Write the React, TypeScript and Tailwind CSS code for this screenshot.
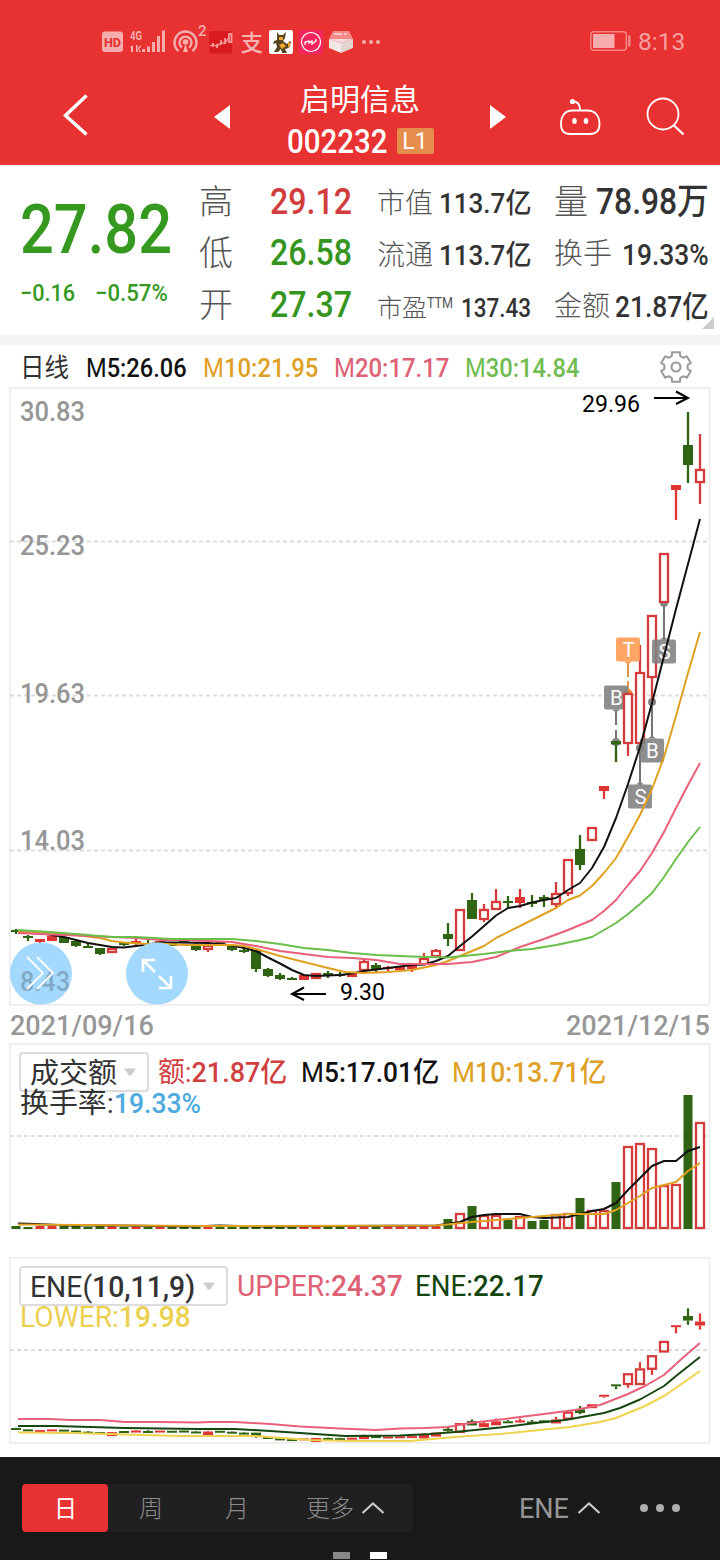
import { useLayoutEffect, useRef, useState } from "react";
import type { ReactNode } from "react";

// scales a single line of text horizontally so that it fills its own box
const Fit = ({ className = "", children }: { className?: string; children: ReactNode }) => {
  const box = useRef<HTMLSpanElement>(null);
  const text = useRef<HTMLSpanElement>(null);
  const [scale, setScale] = useState(1);

  useLayoutEffect(() => {
    if (box.current && text.current && text.current.offsetWidth > 0) {
      setScale(box.current.clientWidth / text.current.offsetWidth);
    }
  }, []);

  return (
    <span ref={box} className={`block shrink-0 leading-none ${className}`}>
      <span ref={text} className="inline-block origin-left whitespace-nowrap" style={{ transform: `scaleX(${scale})` }}>
        {children}
      </span>
    </span>
  );
};

type Kind = "g" | "r" | "h"; // green, red filled, red hollow

// kind, high, body top, body bottom, low, volume height
const candles: [Kind, number, number, number, number, number][] = [
  ["g", 929, 930, 932, 934, 3],
  ["g", 935, 936, 938, 941, 2],
  ["r", 939, 939, 942, 947, 3],
  ["r", 936, 936, 941, 941, 3],
  ["g", 937, 937, 943, 943, 3],
  ["g", 940, 941, 946, 947, 3],
  ["g", 943, 946, 948, 948, 2],
  ["g", 948, 948, 954, 955, 3],
  ["h", 948, 948, 953, 953, 3],
  ["g", 943, 943, 945, 946, 2],
  ["r", 939, 941, 944, 945, 3],
  ["g", 940, 943, 945, 946, 2],
  ["r", 941, 941, 943, 943, 3],
  ["g", 942, 942, 946, 946, 2],
  ["g", 940, 941, 943, 943, 3],
  ["g", 942, 945, 950, 951, 2],
  ["h", 942, 945, 950, 952, 3],
  ["g", 942, 942, 944, 944, 2],
  ["g", 944, 946, 950, 951, 3],
  ["g", 947, 950, 952, 953, 2],
  ["g", 950, 950, 969, 972, 3],
  ["g", 968, 969, 976, 977, 3],
  ["g", 973, 975, 979, 980, 2],
  ["g", 977, 978, 980, 980, 2],
  ["r", 975, 975, 980, 980, 3],
  ["h", 973, 973, 979, 979, 3],
  ["g", 971, 973, 976, 978, 2],
  ["g", 972, 974, 976, 977, 2],
  ["r", 972, 972, 977, 977, 3],
  ["h", 959, 961, 971, 971, 4],
  ["g", 963, 965, 970, 972, 3],
  ["r", 966, 967, 969, 971, 3],
  ["r", 966, 966, 970, 970, 3],
  ["r", 965, 965, 969, 972, 3],
  ["h", 953, 958, 965, 965, 4],
  ["h", 949, 950, 957, 957, 4],
  ["g", 923, 934, 939, 946, 10],
  ["h", 909, 909, 951, 951, 16],
  ["g", 893, 900, 919, 919, 23],
  ["h", 904, 909, 920, 922, 14],
  ["h", 889, 901, 910, 910, 14],
  ["g", 896, 901, 903, 908, 9],
  ["r", 889, 897, 903, 908, 13],
  ["g", 895, 902, 904, 907, 8],
  ["g", 895, 897, 900, 907, 9],
  ["h", 882, 893, 905, 907, 15],
  ["h", 859, 859, 894, 896, 16],
  ["g", 835, 849, 865, 870, 31],
  ["h", 827, 827, 841, 841, 19],
  ["r", 786, 786, 791, 799, 19],
  ["g", 741, 741, 744.5, 762, 47],
  ["h", 693, 693, 744, 756, 83],
  ["h", 645, 672, 744, 744, 86],
  ["h", 615, 615, 678, 700, 81],
  ["h", 553, 553, 603, 603, 44],
  ["r", 485, 485, 490, 520, 45],
  ["g", 412, 445, 465, 483, 134],
  ["h", 434, 469, 483, 504, 107],
];

const xAt = (i: number) => 700 - 12 * (candles.length - 1 - i);
const GREEN = "#2f6413";
const RED = "#d43c3c";

const Candle = ({ kind, x, high, top, bottom, low }: {
  kind: Kind; x: number; high: number; top: number; bottom: number; low: number;
}) => {
  const color = kind === "g" ? GREEN : kind === "r" ? "#df3634" : RED;
  return (
    <g stroke={color} strokeWidth={2.3}>
      {high < top && <path d={`M${x} ${high}V${top}`} />}
      {low > bottom && <path d={`M${x} ${bottom}V${low}`} />}
      {kind === "h" ? (
        <rect x={x - 4} y={top + 1} width={8} height={Math.max(bottom - top - 2, 1)} fill="#fff" />
      ) : (
        <rect x={x - 5} y={top} width={10} height={bottom - top} fill={color} stroke="none" />
      )}
    </g>
  );
};

const Line = ({ color, points }: { color: string; points: string }) => (
  <polyline points={points} fill="none" stroke={color} strokeWidth={2} strokeLinejoin="round" />
);

const Grid = ({ y }: { y: number }) => (
  <path d={`M10 ${y}H709`} stroke="#dcdcdc" strokeWidth={1.8} strokeDasharray="4 3" />
);

const Frame = ({ y, height }: { y: number; height: number }) => (
  <rect x={10} y={y} width={699.5} height={height} fill="none" stroke="#ececec" strokeWidth={1.6} />
);

// trade marker: letter tile with a pointer toward its candle
const Tag = ({ x, y, letter, up, color = "#808080" }: {
  x: number; y: number; letter: string; up?: boolean; color?: string;
}) => (
  <g>
    <rect x={x - 12} y={y - 12} width={24} height={24} rx={2} fill={color} fillOpacity={0.88} />
    {up ? (
      <path d={`M${x - 4} ${y - 12}l4 -3l4 3z`} fill={color} />
    ) : (
      <path d={`M${x - 4} ${y + 12}l4 3l4 -3z`} fill={color} />
    )}
    <text x={x + 0.5} y={y + 7} textAnchor="middle" fontSize={20.5} fill="#fff">{letter}</text>
  </g>
);

const MainChart = () => (
  <svg className="block font-[Roboto]" width={720} height={619} viewBox="0 387 720 619">
    <Frame y={387.8} height={617} />
    {[541.5, 695.5, 850.5].map((y) => <Grid key={y} y={y} />)}
    <g fontSize={27} fontWeight={500} fill="#969696">
      <text x={20} y={420.5} textLength={65} lengthAdjust="spacingAndGlyphs">30.83</text>
      <text x={20} y={554.5} textLength={65} lengthAdjust="spacingAndGlyphs">25.23</text>
      <text x={20} y={702.5} textLength={65} lengthAdjust="spacingAndGlyphs">19.63</text>
      <text x={20} y={850} textLength={65} lengthAdjust="spacingAndGlyphs">14.03</text>
    </g>
    <g stroke="#666" strokeWidth={1.8}>
      <path d="M664 603V640M652 702V738M640 748V785M616 711V740" />
      <path d="M628 663V692" stroke="#d98a3d" />
      <path d="M616 725v5M628 677v4" stroke="#fff" strokeWidth={3} />
    </g>
    <g fill="#858585">
      <circle cx={664} cy={603} r={4} />
      <circle cx={652} cy={702} r={4} />
      <circle cx={640} cy={748} r={4} />
      <circle cx={616} cy={742} r={4} />
      <circle cx={628} cy={693} r={4} fill="#f5822f" />
    </g>
    <Tag x={616} y={697.5} letter="B" />
    {candles.map(([kind, high, top, bottom, low], i) => (
      <Candle key={i} kind={kind} x={xAt(i)} high={high} top={top} bottom={bottom} low={low} />
    ))}
    <Tag x={628} y={649.5} letter="T" color="#ff9a50" />
    <Tag x={664} y={651.5} letter="S" up />
    <Tag x={652} y={750.5} letter="B" up />
    <Tag x={640} y={796.5} letter="S" up />
    <Line color="#111" points="18,932 46,934 64,937 76,940 88,943 100,945 112,947 124,947.5 136,946 148,944.5 160,942.5 180,942.5 208,943 220,944 232,945.5 244,948 256,951 268,957.5 280,963.5 292,970 304,975 316,976 328,975.5 340,975 352,973.5 364,971 376,969.5 400,966.5 412,965 424,964.5 436,961 448,956 460,946 472,936.5 484,926 496,915.5 508,908 520,906 532,902.5 544,900 556,898 568,890 580,883 592,868 604,847 616,818 628,784 640,747 652,703 664,656 676,609 688,564 700,519" />
    <Line color="#e0a020" points="18,932 50,933 76,935 100,938 112,941 124,942.5 148,944 160,943.5 184,945 208,945 232,945 244,946 256,949 280,956 304,962 328,968 345,972 364,973 388,972 412,970 424,967.5 436,965 448,961 460,956 484,946 496,938 520,926 532,920 556,908 568,900 580,895.5 592,886 604,873 616,858 628,837 640,815 652,789 664,757 676,716 688,673 700,632" />
    <Line color="#e8607a" points="18,933 40,934 64,935 112,937 136,938 160,940 184,940 208,941 232,942 256,946 280,951 304,954 328,957 352,958 376,960 400,964 424,964 448,964 472,962 496,957 520,947 544,939 568,930 592,920 604,911 616,900 628,885 640,871 652,853 664,832 676,808 688,785 700,763" />
    <Line color="#6abf4b" points="18,930 50,932 76,934 112,937 136,937 172,939 208,939 232,939 256,941 280,944 304,948 328,950 352,953 376,955 412,956.5 448,957.5 484,954 508,951 532,949 556,945 580,940 592,937 604,930 616,923 628,914 640,904 652,893 664,877 676,859 688,842 700,827" />
    <g fontSize={24} fill="#000">
      <text x={582} y={412} textLength={58} lengthAdjust="spacingAndGlyphs">29.96</text>
      <text x={340} y={1000} textLength={45} lengthAdjust="spacingAndGlyphs">9.30</text>
    </g>
    <g fill="none" stroke="#000" strokeWidth={2}>
      <path d="M654 398H688M676 391.5L688 398L676 404" />
      <path d="M326 994H292M304 987.5L292 994L304 1000" />
    </g>
    <g fill="#a4d9ff">
      <circle cx={41} cy={973.5} r={31} />
      <circle cx={157} cy={973.5} r={31} />
    </g>
    <text x={20} y={990.5} fontSize={27} fontWeight={500} fill="#82a9c6" textLength={50} lengthAdjust="spacingAndGlyphs">8.43</text>
    <g fill="none" stroke="#fff">
      <path d="M27 957L43 973L27 989M37 957L53 973L37 989" strokeWidth={1.8} />
      <path d="M155 972L143 960M143 972V960H155M159 976L171 988M171 976V988H159" strokeWidth={2.6} />
    </g>
  </svg>
);

const VolumeChart = () => (
  <svg className="absolute inset-0" width={720} height={187} viewBox="0 1043 720 187">
    <Frame y={1043.8} height={185} />
    <Grid y={1136} />
    {candles.map(([kind, , , , , v], i) =>
      kind === "g" || v < 6 ? (
        <rect key={i} x={xAt(i) - 4.5} y={1229 - v} width={9} height={v} fill={kind === "g" ? GREEN : "#df3634"} />
      ) : (
        <rect key={i} x={xAt(i) - 4} y={1230 - v} width={8} height={v - 2} fill="#fff" stroke={RED} strokeWidth={2.3} />
      )
    )}
    <Line color="#111" points="18,1223.5 36,1224 70,1225.5 120,1225.5 190,1226.5 220,1225.5 260,1226.5 436,1225.5 460,1222 472,1217 484,1215 496,1214 520,1214 532,1217 544,1218 568,1217 580,1214 592,1211 604,1209 616,1203 628,1190 640,1178 652,1166 664,1161 676,1161 688,1151 700,1147" />
    <Line color="#e0a020" points="18,1224.5 200,1226 436,1225.5 472,1222 508,1219 544,1216 568,1214 604,1214 616,1210 640,1196 652,1188 664,1185 676,1182 688,1171 700,1163" />
  </svg>
);

// main price coordinates squeezed into the ENE panel
const toEne = (y: number) => 1427 + (y - 930) * 0.231;

const EneChart = () => (
  <svg className="absolute inset-0" width={720} height={188} viewBox="0 1257 720 188">
    <Frame y={1257.8} height={185} />
    <Grid y={1350} />
    {candles.map(([kind, high, top, bottom, low], i) => {
      const small = kind === "h" && toEne(bottom) - toEne(top) < 7;
      const t = toEne(top) + 1;
      const b = Math.max(toEne(bottom) + 1, t + (small ? 4 : 2));
      return (
        <Candle key={i} kind={small ? "r" : kind} x={xAt(i)} high={toEne(high) + 1} top={t} bottom={b} low={toEne(low) + 1} />
      );
    })}
    <Line color="#e8607a" points="18,1419 50,1419 70,1420 100,1420 125,1422 160,1422 197,1422.5 210,1422 235,1422 270,1424 300,1426.5 340,1428.5 376,1430 400,1428.5 425,1428 448,1427 470,1423 505,1419 540,1414.5 575,1410 600,1405 628,1394 645,1386 664,1375 682,1358.5 700,1343" />
    <Line color="#14470f" points="18,1426 55,1426 125,1428 200,1429 235,1429 270,1431 300,1433 345,1436 400,1435.5 430,1434 455,1432 500,1427.5 540,1422.5 565,1420 604,1413 620,1408 640,1399.5 664,1386 676,1376 700,1357" />
    <Line color="#efd34e" points="18,1432.5 70,1433 125,1434.5 180,1436 255,1436 310,1440 350,1441 410,1441 455,1437 500,1434 530,1431 570,1427 600,1422 616,1418 628,1413 645,1406 664,1396 680,1385 700,1371" />
  </svg>
);

const StatusBar = () => (
  <div className="flex h-[82px] items-center pl-[100px] pr-[35px]">
    <svg width={284} height={44} viewBox="100 19 284 44" className="font-[Roboto]">
      <rect x={102} y={31.5} width={21} height={20.5} rx={3} fill="#f7adad" />
      <text x={112.5} y={46.5} fontSize={12.5} fontWeight={800} fill="#e83131" textAnchor="middle" textLength={17} lengthAdjust="spacingAndGlyphs">HD</text>
      <g fill="#f7adad">
        <text x={130} y={40} fontSize={12.5} fontWeight={700} textLength={12} lengthAdjust="spacingAndGlyphs">4G</text>
        <path d="M130 47l3-2v7h-2v-4zM136 45h1.600v7H136zM138 48l3-3v2l-2 2l2 3h-2z" />
        <path d="M142 49h3v3h-3zM147 46.500h3V52h-3zM152 42h3v10h-3zM157 36h3v16h-3zM162 30.500h3V52h-3z" />
        <circle cx={185.5} cy={42} r={2.8} />
        <text x={198} y={36} fontSize={15} fontWeight={500}>2</text>
        <path d="M183 52l2.500-8l2.500 8z" />
      </g>
      <g fill="none" stroke="#f7adad" strokeWidth={2.4}>
        <path d="M182 47.500a6 6 0 1 1 7 0M178.500 51a11 11 0 1 1 14 0" />
      </g>
      <rect x={209} y={31} width={23} height={22.5} rx={3} fill="#d91c20" />
      <g fill="none" stroke="#f49a9a" strokeWidth={1.3}>
        <path d="M210 46l3-1.500l4 2l4-4l4 1l3-5" />
        <path d="M213 43v4M217 44v4M221 40v5M225 38v6M229 34h2.500v8H229z" strokeWidth={1.8} />
      </g>
      <text x={240.5} y={50.5} fontSize={22.5} fontWeight={500} fill="#f7b3b3" className="font-['Noto_Sans_CJK_SC']">支</text>
      <rect x={269} y={30} width={24} height={24} rx={2} fill="#fff" />
      <path d="M277 32l2 3h4l3-3l-1 6l-2 3l4 3l3-3l1 1l-2 6l-4 1l2 4h-5l-1-4l-3 3h-4l3-5l-1-4l-3 1l1-3l3-1z" fill="#57431f" />
      <path d="M279 37h4v3h-4zM279 45l4-2l3 3l-4 3zM288 41l3 3l-3 4z" fill="#f0a52b" />
      <rect x={299} y={30} width={24} height={24} fill="#f5265f" />
      <circle cx={311} cy={42} r={9.5} fill="none" stroke="#fff" strokeWidth={1.2} />
      <path d="M305 45v-3l4-1v2l3-2v3l4-3v-2" fill="none" stroke="#fff" strokeWidth={1.3} />
      <path d="M333 31h16l4 8h-24z" fill="#f28a8a" />
      <path d="M329 39l12 4v10l-12-5z" fill="#f3e6e6" />
      <path d="M353 39l-12 4v10l12-5z" fill="#e3d3d3" />
      <path d="M329 39h24l-12 4z" fill="#f7dada" />
      <path d="M334 34h8M344 34h3" stroke="#fff" strokeWidth={1.2} />
      <g fill="#f7adad">
        <circle cx={364} cy={42} r={2} />
        <circle cx={371} cy={42} r={2} />
        <circle cx={378} cy={42} r={2} />
      </g>
    </svg>
    <svg className="ml-auto" width={42} height={22} viewBox="589 31 42 22">
      <rect x={590.8} y={32.8} width={35.5} height={18.5} rx={3} fill="none" stroke="#f28585" strokeWidth={1.6} />
      <rect x={593} y={35} width={21.5} height={14} fill="#f7adad" />
      <path d="M628 36.500h2.500v11H628z" fill="#f28585" />
    </svg>
    <Fit className="ml-[7px] mt-[2px] w-[47px] text-2xl leading-none text-[#f5a0a0]">8:13</Fit>
  </div>
);

const TitleBar = () => (
  <div className="flex h-[83px] items-start">
    <svg className="ml-[62px] mt-[11px]" width={28} height={44} viewBox="62 93 28 44">
      <path d="M86.500 95.500L65.500 115.500L86.500 134.500" fill="none" stroke="#fff" strokeWidth={3.5} />
    </svg>
    <svg className="ml-[124px] mt-[23px]" width={16} height={24} viewBox="0 0 16 24">
      <path d="M0 12L16 0V24z" fill="#fff" />
    </svg>
    <div className="ml-[56px] flex w-[148px] flex-col items-center pt-[2px]">
      <span className="text-[30px] leading-[32px]">启明信息</span>
      <div className="mt-[8px] flex h-[34px] items-center gap-[9px]">
        <Fit className="w-[101px] text-[33px] font-medium">002232</Fit>
        <span className="flex h-[26px] w-[37px] items-center justify-center rounded-[2px] bg-[#e58e4b] text-[23px] leading-none">L1</span>
      </div>
    </div>
    <svg className="ml-[56px] mt-[23px]" width={16} height={24} viewBox="0 0 16 24">
      <path d="M16 12L0 0V24z" fill="#fff" />
    </svg>
    <svg className="ml-[52px] mt-[15px]" width={44} height={42} viewBox="558 97 44 42" fill="none" stroke="#fff" strokeWidth={1.8}>
      <path d="M572 110.500H588C594 110.500 599.500 115 599.500 124C599.500 131 596 134 590 134H570C564 134 561 131 561 124C561 115 566 110.500 572 110.500Z" />
      <path d="M573 101.500q7 0 7 8.500" />
      <circle cx={572.5} cy={101.5} r={2.6} fill="#fff" stroke="none" />
      <ellipse cx={574.5} cy={121} rx={2.3} ry={3} fill="#fff" stroke="none" />
      <ellipse cx={586} cy={121} rx={2.3} ry={3} fill="#fff" stroke="none" />
    </svg>
    <svg className="ml-[43px] mt-[14px]" width={42} height={42} viewBox="645 96 42 42" fill="none" stroke="#fff" strokeWidth={1.8}>
      <circle cx={663} cy={114} r={15.5} />
      <path d="M673.500 125L683.500 134.500" strokeWidth={2.4} />
    </svg>
  </div>
);

const Quote = () => (
  <section className="relative flex h-[170px] bg-white text-[#333]">
    <div className="ml-[20px] w-[179px] pt-[30px] text-[#36991f]">
      <Fit className="w-[152px] text-[69px] font-medium">27.82</Fit>
      <div className="mt-[17px] flex gap-[20px] text-[24px] font-medium">
        <Fit className="w-[55px]">−0.16</Fit>
        <Fit className="w-[73px]">−0.57%</Fit>
      </div>
    </div>
    <div className="flex w-[153px] flex-col pt-[11px] text-[36px] font-medium">
      <div className="flex h-[51px] items-center justify-between text-[#d13c3c]">
        <span className="text-[34px] font-light leading-none text-[#555]">高</span>
        <Fit className="w-[82px]">29.12</Fit>
      </div>
      <div className="flex h-[52px] items-center justify-between text-[#36951f]">
        <span className="text-[34px] font-light leading-none text-[#555]">低</span>
        <Fit className="w-[82px]">26.58</Fit>
      </div>
      <div className="flex h-[51px] items-center justify-between text-[#36951f]">
        <span className="text-[34px] font-light leading-none text-[#555]">开</span>
        <Fit className="w-[82px]">27.37</Fit>
      </div>
    </div>
    <div className="ml-[25px] flex w-[154px] flex-col pt-[13px] text-[28px] font-medium">
      <div className="flex h-[52px] items-center justify-between">
        <span className="text-[28px] font-light leading-none text-[#555]">市值</span>
        <Fit className="w-[92px]">113.7亿</Fit>
      </div>
      <div className="flex h-[52px] items-center justify-between">
        <span className="text-[28px] font-light leading-none text-[#555]">流通</span>
        <Fit className="w-[92px]">113.7亿</Fit>
      </div>
      <div className="flex h-[52px] items-center justify-between">
        <span className="flex items-center text-[25px] font-light leading-none text-[#555]">
          市盈
          <Fit className="w-[26px] self-start text-[14px] font-normal">TTM</Fit>
        </span>
        <Fit className="w-[70px] text-[26px]">137.43</Fit>
      </div>
    </div>
    <div className="ml-[23px] flex w-[155px] flex-col pt-[11px] text-[30px] font-medium">
      <div className="flex h-[51px] items-center justify-between">
        <span className="text-[34px] font-light leading-none text-[#555]">量</span>
        <Fit className="w-[113px] text-[36px]">78.98万</Fit>
      </div>
      <div className="flex h-[54px] items-center justify-between pt-[1px]">
        <span className="text-[29px] font-light leading-none text-[#555]">换手</span>
        <Fit className="w-[87px]">19.33%</Fit>
      </div>
      <div className="flex h-[51px] items-center justify-between">
        <span className="text-[28px] font-light leading-none text-[#555]">金额</span>
        <Fit className="w-[94px]">21.87亿</Fit>
      </div>
    </div>
    <svg className="absolute bottom-[6px] right-[6px]" width={12} height={12} viewBox="0 0 12 12">
      <path d="M12 0V12H0z" fill="#ccc" />
    </svg>
  </section>
);

const gearPath = () => {
  const points: string[] = [];
  for (let k = 0; k < 6; k++) {
    [[-30, 11.5], [-20, 12], [-15, 15.3], [15, 15.3], [20, 12]].forEach(([offset, r]) => {
      const a = ((k * 60 - 90 + offset) * Math.PI) / 180;
      points.push(`${(16 + r * Math.cos(a)).toFixed(1)} ${(16 + r * Math.sin(a)).toFixed(1)}`);
    });
  }
  return `M${points.join("L")}Z`;
};

const Legend = () => (
  <div className="flex h-[42px] items-center bg-white pl-[20px] pt-[4px] text-[26px] font-medium">
    <Fit className="w-[49px] text-[26px] font-normal text-[#333]">日线</Fit>
    <Fit className="ml-[17px] w-[101px] text-[#111]"><span className="font-normal">M</span>5:26.06</Fit>
    <Fit className="ml-[16px] w-[115px] text-[#dfa026]"><span className="font-normal">M</span>10:21.95</Fit>
    <Fit className="ml-[16px] w-[115px] text-[#de6275]"><span className="font-normal">M</span>20:17.17</Fit>
    <Fit className="ml-[16px] w-[114px] text-[#70bc50]"><span className="font-normal">M</span>30:14.84</Fit>
    <svg className="-mt-[2px] ml-[81px]" width={32} height={32} viewBox="0 0 32 32" fill="none" stroke="#999" strokeWidth={2} strokeLinejoin="round">
      <path d={gearPath()} />
      <circle cx={16} cy={16} r={4.5} strokeWidth={2.2} />
    </svg>
  </div>
);

const Select = ({ className, children }: { className: string; children: ReactNode }) => (
  <div className={`flex h-[40px] shrink-0 items-center justify-between rounded-[4px] border-2 border-[#dcdcdc] bg-white pl-[9px] pr-[10px] text-[#333] ${className}`}>
    {children}
    <svg width={14} height={9} viewBox="0 0 14 9">
      <path d="M1 0.500H13L8.500 7Q7 8.500 5.500 7z" fill="#ccc" />
    </svg>
  </div>
);

const Chevron = ({ className }: { className: string }) => (
  <svg className={className} width={24} height={14} viewBox="0 0 24 14">
    <path d="M1.500 12L12 2.500L22.500 12" fill="none" stroke="#c8c8c8" strokeWidth={2.2} />
  </svg>
);

const BottomBar = () => (
  <footer className="h-[103px] bg-[#191919] pt-[27px] text-[#8b8b8b]">
    <div className="ml-[22px] flex h-[48px] items-center">
      <div className="flex h-[48px] w-[391px] items-center rounded-[4px] bg-[#202020] text-[24px] font-light leading-none">
        <span className="flex h-[48px] w-[86px] items-center justify-center rounded-[4px] bg-[#e83131] pt-[2px] font-normal text-white">
          <Fit className="w-[23px]">日</Fit>
        </span>
        <span className="w-[86px] pt-[2px] text-center">周</span>
        <span className="w-[86px] pt-[2px] text-center">月</span>
        <span className="ml-[26px] pt-[2px]">更多</span>
        <Chevron className="ml-[7px]" />
      </div>
      <Fit className="ml-[106px] w-[50px] pt-[2px] text-[27px] text-[#969696]">ENE</Fit>
      <Chevron className="ml-[8px]" />
      <div className="ml-[39px] flex gap-[8px]">
        <span className="size-2 rounded-full bg-[#b0b0b0]" />
        <span className="size-2 rounded-full bg-[#b0b0b0]" />
        <span className="size-2 rounded-full bg-[#b0b0b0]" />
      </div>
    </div>
    <div className="ml-[333px] mt-[20px] flex gap-[20px]">
      <span className="h-[7px] w-[17px] bg-[#888]" />
      <span className="h-[7px] w-[17px] bg-white" />
    </div>
  </footer>
);

export default function App() {
  return (
    <div className="h-[1560px] w-[720px] overflow-hidden bg-white font-['Roboto','Noto_Sans_CJK_SC',sans-serif]">
      <header className="h-[165px] bg-[#e83131] text-white">
        <StatusBar />
        <TitleBar />
      </header>
      <Quote />
      <div className="h-[10px] bg-[#f3f3f3]" />
      <Legend />
      <MainChart />
      <div className="flex h-[37px] items-center justify-between pl-[10px] pr-[10px] pt-[3px] text-[27px] font-medium text-[#979797]">
        <Fit className="w-[144px]">2021/09/16</Fit>
        <Fit className="w-[144px]">2021/12/15</Fit>
      </div>

      <section className="relative h-[187px]">
        <VolumeChart />
        <div className="relative flex items-center pl-[19px] pt-[9px] text-[28px] font-medium">
          <Select className="w-[130px]">
            <Fit className="w-[87px] pt-[3px] text-[28px] font-normal">成交额</Fit>
          </Select>
          <Fit className="ml-[9px] w-[129px] pt-[2px] text-[#d04040]"><span className="font-normal">额:</span>21.87亿</Fit>
          <Fit className="ml-[14px] w-[138px] pt-[2px] text-[#111]"><span className="font-normal">M</span>5:17.01亿</Fit>
          <Fit className="ml-[13px] w-[154px] pt-[2px] text-[#dfa026]"><span className="font-normal">M</span>10:13.71亿</Fit>
        </div>
        <div className="relative -mt-[2px] flex pl-[20px] text-[28px] font-medium">
          <Fit className="w-[94px] font-normal text-[#333]">换手率:</Fit>
          <Fit className="w-[87px] text-[#4da9de]">19.33%</Fit>
        </div>
      </section>

      <section className="relative mt-[27px] h-[200px]">
        <EneChart />
        <div className="relative flex items-center pl-[19px] pt-[9px] text-[29px] font-medium">
          <Select className="w-[209px]">
            <Fit className="w-[165px] pt-[2px]"><span className="font-normal">ENE(</span>10,11,9)</Fit>
          </Select>
          <Fit className="ml-[9px] w-[166px] text-[#dd6074]"><span className="font-normal">UPPER:</span>24.37</Fit>
          <Fit className="ml-[12px] w-[129px] text-[#14450f]"><span className="font-normal">ENE:</span>22.17</Fit>
        </div>
        <div className="relative -mt-[3px] flex pl-[20px] text-[29px] font-medium text-[#ecd04f]">
          <Fit className="w-[171px]"><span className="font-normal">LOWER:</span>19.98</Fit>
        </div>
      </section>
      <BottomBar />
    </div>
  );
}
